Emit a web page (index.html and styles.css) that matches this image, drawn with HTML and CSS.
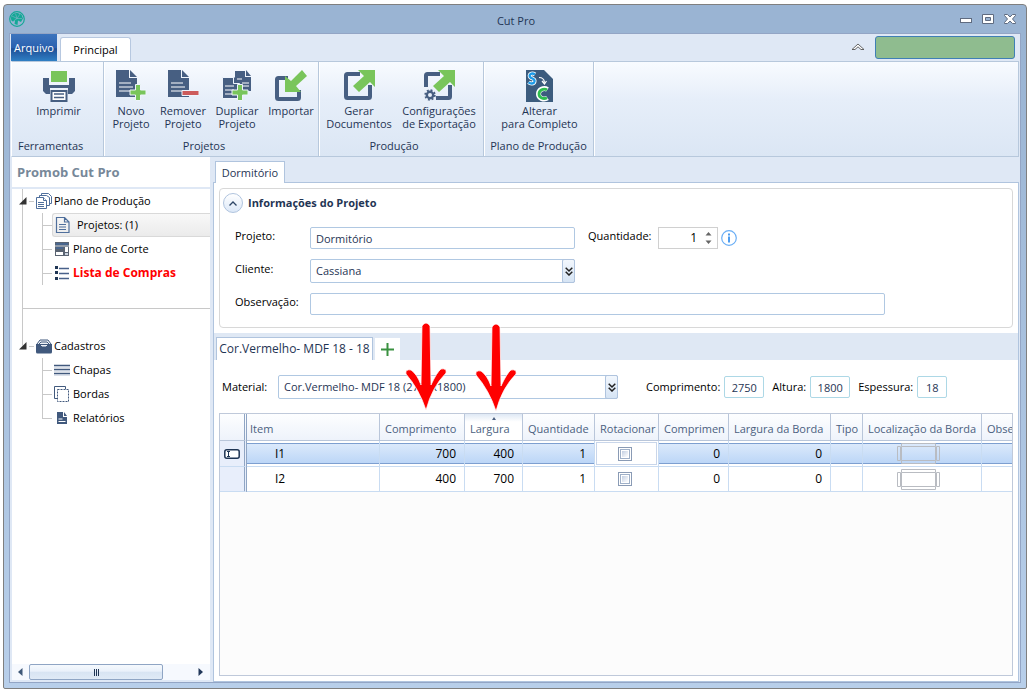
FILE: index.html
```html
<!DOCTYPE html>
<html lang="pt-BR">
<head>
<meta charset="utf-8">
<title>Cut Pro</title>
<link rel="stylesheet" href="styles.css">
</head>
<body>
<div class="window">
  <header class="titlebar">
    <svg class="app-logo" width="16" height="16" viewBox="0 0 16 16"><circle cx="8" cy="8" r="7.300" fill="none" stroke="#14a896" stroke-width="1.200"/><path d="M8.500 2C4 1.500 2 4.500 2 7.500c0 2 1 3 2 3l2-1-.5 3.500 3 1L9 9.500 12 11l2-3.500-1.500-4z" fill="#14a896"/><path d="M8 7.500L3 5M8 7.500L6.500 2.500M8 7.500L11 3M8 7.500l5 0M8 7.500L4.500 10" stroke="#9ab4d3" stroke-width=".5"/></svg>
    <h1 class="title">Cut Pro</h1>
    <div class="window-buttons">
      <button aria-label="Minimizar"><svg width="14" height="14" viewBox="0 0 14 14"><rect x="1.500" y="6.500" width="11" height="4" fill="#fff" stroke="#5f6b80"/></svg></button>
      <button aria-label="Maximizar"><svg width="14" height="14" viewBox="0 0 14 14"><path fill-rule="evenodd" d="M1.500 2.500h11v9h-11zM4.500 5.500v3h5v-3z" fill="#fff" stroke="#5f6b80"/></svg></button>
      <button aria-label="Fechar"><svg width="14" height="14" viewBox="0 0 14 14"><path d="M1.500 2.500h3L7 5l2.500-2.500h3v1L9.500 7l3 3.500v1h-3L7 9l-2.500 2.500h-3v-1l3-3.500-3-3.500z" fill="#fff" stroke="#5f6b80"/></svg></button>
    </div>
  </header>
  <div class="frame">
    <nav class="ribbon-tabs">
      <button class="tab-file">Arquivo</button>
      <button class="tab-main">Principal</button>
      <button class="collapse" aria-label="Recolher"><svg width="14" height="8" viewBox="0 0 14 8"><path d="M1 6.500L7 1l6 5.500h-3L7 3.800 4 6.500z" fill="#fff" stroke="#555" stroke-width=".9"/></svg></button>
      <div class="status"></div>
    </nav>
    <section class="ribbon">
      <div class="group g-tools">
        <div class="group-items">
          <button class="tool w-print"><svg width="32" height="32" viewBox="0 0 32 32"><path d="M0 8h6v7h20V8h6v13l-3 3h-4v-6H7v6H3l-3-3z" fill="#475f82"/><rect x="8" y="1" width="16" height="11" fill="#79c55b"/><path d="M8.500 21h15v10h-15z" fill="#fff" stroke="#475f82" stroke-width="2"/><path d="M11 24h10M11 27.500h10" stroke="#475f82" stroke-width="1.500"/></svg><span>Imprimir</span></button>
        </div>
        <div class="group-name">Ferramentas</div>
      </div>
      <div class="group g-projects">
        <div class="group-items">
          <button class="tool w-new"><svg width="32" height="32" viewBox="0 0 32 32"><path d="M1 0h13v8h8v19H1z" fill="#475f82"/><path d="M15 0l7 7h-7z" fill="#475f82"/><path d="M4 13h12M4 17h14M4 21h12" stroke="#fff" stroke-width="1.200"/><path d="M20.500 14.500h5v5.500h5.500v5h-5.500v5.500h-5V25H15v-5h5.500z" fill="#79c55b" stroke="#eef4fc"/></svg><span>Novo<br>Projeto</span></button>
          <button class="tool w-remove"><svg width="32" height="32" viewBox="0 0 32 32"><path d="M1 0h13v8h8v19H1z" fill="#475f82"/><path d="M15 0l7 7h-7z" fill="#475f82"/><path d="M4 13h12M4 17h14M4 21h12" stroke="#fff" stroke-width="1.200"/><path d="M15 20.500h17v5H15z" fill="#cd5c5c" stroke="#eef4fc"/></svg><span>Remover<br>Projeto</span></button>
          <button class="tool w-copy"><svg width="32" height="32" viewBox="0 0 32 32"><path d="M14 1h10v6h6v14H14z" fill="#475f82"/><path d="M25 0l5 6h-5z" fill="#475f82"/><path d="M16 9h5M21 13h7M21 16h7" stroke="#fff"/><path d="M1.500 7.500h11v6h6v15h-17z" fill="#475f82" stroke="#eef4fc"/><path d="M13 7l6 6h-6z" fill="#475f82"/><path d="M4 16h9M4 20h9M4 24h7" stroke="#fff"/><path d="M16.500 14.500h5v5.500h5.500v5h-5.500v5.500h-5V25H11v-5h5.500z" fill="#79c55b" stroke="#eef4fc"/></svg><span>Duplicar<br>Projeto</span></button>
          <button class="tool w-import"><svg width="32" height="32" viewBox="0 0 32 32"><path d="M13 8H3.500q-1.500 0-1.500 1.500v18q0 1.500 1.500 1.500h19q1.500 0 1.500-1.500V20" fill="none" stroke="#475f82" stroke-width="4"/><path d="M27 0l5 6-11 10 5 6H10V6l6 5z" fill="#79c55b"/></svg><span>Importar</span></button>
        </div>
        <div class="group-name">Projetos</div>
      </div>
      <div class="group g-output">
        <div class="group-items">
          <button class="tool w-docs"><svg width="32" height="32" viewBox="0 0 32 32"><path d="M17 4H4.500Q3 4 3 5.500v21Q3 28 4.500 28h21q1.500 0 1.500-1.500V15" fill="none" stroke="#475f82" stroke-width="4"/><path d="M15 0h17v17l-5-5-11 10-6-6 11-10z" fill="#79c55b"/></svg><span>Gerar<br>Documentos</span></button>
          <button class="tool w-config"><svg width="32" height="32" viewBox="0 0 32 32"><path d="M17 4H4.500Q3 4 3 5.500V17M13 28h12.500q1.500 0 1.500-1.500V15" fill="none" stroke="#475f82" stroke-width="4"/><path d="M15 0h17v17l-5-5-11 10-6-6 11-10z" fill="#79c55b"/><circle cx="7" cy="25" r="3.200" fill="none" stroke="#475f82" stroke-width="2.400"/><circle cx="7" cy="25" r="4.800" fill="none" stroke="#475f82" stroke-width="1.800" stroke-dasharray="1.900 1.870"/></svg><span>Configurações<br>de Exportação</span></button>
        </div>
        <div class="group-name">Produção</div>
      </div>
      <div class="group g-plan">
        <div class="group-items">
          <button class="tool w-change"><svg width="27" height="32" viewBox="0 0 27 32"><path d="M0 0h18l9 9v23H0z" fill="#3c5c7e"/><path d="M9 4.500C5.500 2 2 5 4.500 7.500c2 1.500 4.500 1 4 4-.5 2.500-4 2.500-6 .8" fill="none" stroke="#fff" stroke-width="4"/><path d="M9 4.500C5.500 2 2 5 4.500 7.500c2 1.500 4.500 1 4 4-.5 2.500-4 2.500-6 .8" fill="none" stroke="#1d9be8" stroke-width="2.400"/><path d="M13 7.500q5 0 5.500 5M16 11l2.500 3 2-3" fill="none" stroke="#fff" stroke-width="1.200"/><path d="M21.500 19.500c-4-2.500-9 .5-9 4.500s5 6.500 9 4" fill="none" stroke="#fff" stroke-width="5"/><path d="M21 19.800c-3.500-2-8 .5-8 4.200s4.500 5.700 8 3.700" fill="none" stroke="#2ebd4e" stroke-width="2.800"/></svg><span>Alterar<br>para Completo</span></button>
        </div>
        <div class="group-name">Plano de Produção</div>
      </div>
    </section>

    <div class="workspace">
      <aside class="sidebar">
        <h2 class="side-title">Promob Cut Pro</h2>
        <div class="tree-area">
          <ul class="tree">
            <li class="root first">
              <div class="node"><svg class="expander" width="8" height="8" viewBox="0 0 8 8"><path d="M7.500 0v7.500H0z" fill="#333"/></svg><i class="stub"></i><svg width="16" height="16" viewBox="0 0 16 16"><g fill="#fff" stroke="#4f6f9c"><path d="M5.500 .5h7l3 3v7h-10z"/><path d="M3.500 2.500h7l3 2v8h-10z"/><path d="M.5 4.500h7l3 3v8H.5z"/><path d="M2 9.500h6M2 11.500h6M2 13.500h6M7.500 4.500v3h3"/></g></svg><span>Plano de Produção</span></div>
              <ul>
                <li><div class="node selected"><svg width="16" height="16" viewBox="0 0 16 16"><path d="M1.500 .5h8l4.500 4.500v10.500H1.500zM9.500 .5V5H14M4 7.500h7M4 10h7M4 12.500h7" fill="none" stroke="#4f6f9c" stroke-width="1.200"/></svg><span>Projetos: (1)</span></div></li>
                <li><div class="node"><svg width="16" height="16" viewBox="0 0 16 16"><path d="M1 1h14v14H1z" fill="#5a6472"/><path d="M2 3h12M2 7h7" stroke="#49668e" stroke-width="2"/><path d="M1 5h14" stroke="#c9d2de"/><path d="M2 11h7v3H2zM11 6h3v5h-3z" fill="#fff"/><path d="M11 12h3v2h-3z" fill="#c9d2de"/></svg><span>Plano de Corte</span></div></li>
                <li><div class="node alert"><svg width="16" height="16" viewBox="0 0 16 16"><path d="M1 1h3v3H1zM1 6h3v3H1zM1 12h3v3H1z" fill="#1f3554"/><path d="M5 3.500h10M5 8.500h10M5 13.500h10" stroke="#49618a" stroke-width="1.500"/></svg><span>Lista de Compras</span></div></li>
              </ul>
            </li>
            <li class="root second">
              <div class="node"><svg class="expander" width="8" height="8" viewBox="0 0 8 8"><path d="M7.500 0v7.500H0z" fill="#333"/></svg><i class="stub"></i><svg width="16" height="16" viewBox="0 0 16 16"><path d="M0 6h16v8q0 1.500-1.500 1.500h-13Q0 15.500 0 14z" fill="#41597d"/><path d="M1 6l3-4h8l3 4M3 6l2-2h6l2 2M4 7l2 2h4l2-2" fill="#eef2f7" stroke="#41597d"/></svg><span>Cadastros</span></div>
              <ul>
                <li><div class="node"><svg width="16" height="16" viewBox="0 0 16 16"><path d="M0 3.500h16M0 7.500h16M0 11.500h16" stroke="#41597d" stroke-width="1.500"/><path d="M0 5h16M0 9h16M0 13h16" stroke="#b9c4d6"/></svg><span>Chapas</span></div></li>
                <li><div class="node"><svg width="16" height="16" viewBox="0 0 16 16"><path d="M3 12.500H.5V.5h11V3" fill="none" stroke="#41597d"/><path d="M3.500 3.500h11v12h-11z" fill="none" stroke="#41597d" stroke-dasharray="2 1"/></svg><span>Bordas</span></div></li>
                <li class="last"><div class="node"><svg width="16" height="16" viewBox="0 0 16 16"><path d="M3 2h6v5h4v7H3z" fill="#41597d"/><path d="M10 2l3 4h-3z" fill="#41597d"/><path d="M4.500 9h4M4.500 11.500h7" stroke="#fff"/></svg><span>Relatórios</span></div></li>
              </ul>
            </li>
          </ul>
        </div>
        <div class="hscroll">
          <button aria-label="Rolar para a esquerda"><svg width="5" height="8" viewBox="0 0 5 8"><path d="M4.500 0v8L0 4z" fill="#3f5878"/></svg></button>
          <div class="thumb"><i></i><i></i><i></i></div>
          <button aria-label="Rolar para a direita"><svg width="5" height="8" viewBox="0 0 5 8"><path d="M.5 0v8L5 4z" fill="#22385a"/></svg></button>
        </div>
      </aside>

      <main class="main">
        <div class="doc-tabs"><button class="doc-tab">Dormitório</button></div>
        <div class="doc">
          <fieldset class="info">
            <div class="info-head">
              <button class="round" aria-label="Recolher informações"><svg width="8" height="5" viewBox="0 0 8 5"><path d="M.5 4.500L4 1l3.500 3.500" fill="none" stroke="#2d4566" stroke-width="1.300"/></svg></button>
              <h3>Informações do Projeto</h3>
            </div>
            <div class="form-row">
              <label for="projeto">Projeto:</label>
              <input id="projeto" class="field medium" type="text" value="Dormitório">
              <label class="qty-label" for="quantidade">Quantidade:</label>
              <div class="spin">
                <input id="quantidade" type="text" value="1">
                <svg width="7" height="12" viewBox="0 0 7 12"><path d="M.5 3.500L3.500 0l3 3.500zM.5 8.500h6l-3 3.500z" fill="#666"/></svg>
              </div>
              <svg class="hint" width="16" height="16" viewBox="0 0 16 16"><circle cx="8" cy="8" r="7.300" fill="#fff" stroke="#6aaef5" stroke-width="1.200"/><path d="M7 3.500h2v2H7zM7 6.500h2v6H7z" fill="#4d9df0"/></svg>
            </div>
            <div class="form-row tall">
              <label for="cliente">Cliente:</label>
              <div class="combo medium">
                <select id="cliente"><option>Cassiana</option></select>
                <span class="drop"><svg width="8" height="9" viewBox="0 0 8 9"><path d="M.7 .7L4 4 7.300 .7M.7 4.700L4 8l3.300-3.300" fill="none" stroke="#222" stroke-width="1.500"/></svg></span>
              </div>
            </div>
            <div class="form-row">
              <label for="obs">Observação:</label>
              <input id="obs" class="field long" type="text">
            </div>
          </fieldset>

          <section class="sheet">
            <div class="sheet-tabs">
              <button class="sheet-tab">Cor.Vermelho- MDF 18 - 18</button>
              <button class="add" aria-label="Adicionar"><svg width="13" height="13" viewBox="0 0 13 13"><path d="M6.500 0v13M0 6.500h13" stroke="#3a9140" stroke-width="2"/></svg></button>
            </div>
            <div class="material">
              <label for="material">Material:</label>
              <div class="combo wide">
                <select id="material"><option>Cor.Vermelho- MDF 18 (2750x1800)</option></select>
                <span class="drop"><svg width="8" height="9" viewBox="0 0 8 9"><path d="M.7 .7L4 4 7.300 .7M.7 4.700L4 8l3.300-3.300" fill="none" stroke="#222" stroke-width="1.500"/></svg></span>
              </div>
              <div class="dims">
                <div class="dim"><label for="comp">Comprimento:</label><input id="comp" type="text" value="2750" readonly></div>
                <div class="dim"><label for="alt">Altura:</label><input id="alt" type="text" value="1800" readonly></div>
                <div class="dim narrow"><label for="esp">Espessura:</label><input id="esp" type="text" value="18" readonly></div>
              </div>
            </div>
            <div class="grid">
              <table>
                <colgroup><col class="c-head"><col class="c-item"><col class="c-comp"><col class="c-larg"><col class="c-qty"><col class="c-rot"><col class="c-cb"><col class="c-lb"><col class="c-tipo"><col class="c-loc"><col></colgroup>
                <thead><tr><th></th><th>Item</th><th>Comprimento</th><th class="sorted">Largura</th><th>Quantidade</th><th>Rotacionar</th><th>Comprimen</th><th>Largura da Borda</th><th>Tipo</th><th>Localização da Borda</th><th>Obse</th></tr></thead>
                <tbody>
                  <tr class="current"><td><svg width="16" height="10" viewBox="0 0 16 10"><rect x=".8" y=".8" width="14.400" height="8.400" rx="2" fill="#fff" stroke="#1f3554" stroke-width="1.500"/><path d="M3 2.500h3M3 7.500h3M4.500 2.500v5" stroke="#1f3554"/></svg></td><td class="item">I1</td><td class="n">700</td><td class="n">400</td><td class="n">1</td><td class="check"><input type="checkbox" aria-label="Rotacionar I1"></td><td class="n">0</td><td class="n">0</td><td></td><td class="edge"><svg width="44" height="23" viewBox="0 0 44 23"><path d="M5.500 1.500h34v3h-34zM5.500 18.500h34v3h-34zM5.500 4.500v14M39.500 4.500v14M1.500 4.500h3v14h-3zM40.500 4.500h3v14h-3z" fill="none" stroke="#b9bcc2"/></svg></td><td></td></tr>
                  <tr><td></td><td class="item">I2</td><td class="n">400</td><td class="n">700</td><td class="n">1</td><td class="check"><input type="checkbox" aria-label="Rotacionar I2"></td><td class="n">0</td><td class="n">0</td><td></td><td class="edge"><svg width="44" height="23" viewBox="0 0 44 23"><path d="M5.500 1.500h34v3h-34zM5.500 18.500h34v3h-34zM5.500 4.500v14M39.500 4.500v14M1.500 4.500h3v14h-3zM40.500 4.500h3v14h-3z" fill="none" stroke="#b9bcc2"/></svg></td><td></td></tr>
                </tbody>
              </table>
            </div>
            <svg class="arrow a1" width="44" height="92" viewBox="0 0 44 92"><path d="M18 5Q22 -1 26 5L27 64Q33 51 37 48q6-1 5 4Q28 66 22 89 15 68 2 53q-1-5 5-4 6 4 10 15z" fill="#fe0000" stroke="#fff" stroke-opacity=".7"/></svg>
            <svg class="arrow a2" width="44" height="92" viewBox="0 0 44 92"><path d="M18 5Q22 -1 26 5L27 64Q33 51 37 48q6-1 5 4Q28 66 22 89 15 68 2 53q-1-5 5-4 6 4 10 15z" fill="#fe0000" stroke="#fff" stroke-opacity=".7"/></svg>
          </section>
        </div>
      </main>
    </div>
  </div>
</div>
</body>
</html>
```
FILE: styles.css
```css
* { box-sizing: border-box; }

body {
  margin: 0;
  background: #fff;
  font-family: "Open Sans", "Noto Sans", sans-serif;
  font-size: 11px;
  line-height: 16px;
  color: #000;
}

button, input, select { font: inherit; color: inherit; }
button { padding: 0; border: 0; background: none; }
svg { display: block; flex: none; }
h1, h2, h3, ul { margin: 0; padding: 0; }
ul { list-style: none; }

.window {
  display: flex;
  flex-direction: column;
  min-height: calc(100vh - 7px);
  margin: 4px 3px 3px;
  padding: 0 5px;
  border: 1px solid #7f7f7f;
  border-radius: 4px 4px 2px 2px;
  background: linear-gradient(#9ab4d3, #9ab4d3 30px, #b8cfea);
}

.titlebar {
  display: grid;
  grid-template-columns: 80px 1fr 80px;
  align-items: center;
  height: 28px;
}
.title { font-size: 11px; font-weight: 400; text-align: center; color: #1f3554; padding: 4px 0 0 2px; }
.window-buttons { display: flex; justify-content: flex-end; gap: 8px; padding-right: 4px; }

.frame {
  flex: 1;
  display: flex;
  flex-direction: column;
  margin-bottom: 5px;
  padding: 0 1px;
  border: 1px solid #93a5c5;
  background: #dfe8f5;
}

.ribbon-tabs { display: flex; align-items: flex-end; height: 27px; }
.tab-file {
  width: 46px;
  height: 27px;
  color: #fff;
  background: linear-gradient(#3c74bd, #2b62b0 50%, #1f4f97 55%, #2f7fc4);
}
.tab-main {
  width: 71px;
  height: 24px;
  margin-left: 3px;
  border: 1px solid #b7c8e0;
  border-bottom: 0;
  border-radius: 3px 3px 0 0;
  background: #fff;
}
.collapse { margin: 0 10px 10px auto; }
.status {
  width: 140px;
  height: 23px;
  margin: 0 4px 2px 0;
  border: 1px solid #3f7fb5;
  border-radius: 3px;
  background: #8fbc8f;
}

.ribbon {
  display: flex;
  height: 96px;
  border: 1px solid #b7c8dc;
  border-left-color: #fff;
  background: linear-gradient(#f8fbff, #e6eef9 40%, #dbe6f4);
  color: #1f3554;
}
.group {
  display: flex;
  flex-direction: column;
  justify-content: space-between;
  border-right: 1px solid #b7c8dc;
  box-shadow: 1px 0 #fff;
  padding: 8px 0 2px;
  white-space: nowrap;
}
.g-tools { width: 92px; }
.g-projects { width: 215px; }
.g-output { width: 165px; }
.g-plan { width: 110px; }
.group-items { display: flex; justify-content: center; }
.group-name { text-align: center; }
.g-tools .group-name { text-align: left; padding-left: 6px; }
.g-projects .group-name, .g-output .group-name { padding-right: 14px; }
.g-tools .group-items, .g-plan .group-items { padding-left: 2px; }
.tool {
  display: flex;
  flex-direction: column;
  align-items: center;
  gap: 2px;
  line-height: 13px;
}
.w-new, .w-remove { width: 52px; }
.w-copy { width: 56px; }
.w-import { width: 52px; }
.w-docs { width: 76px; }
.w-config { width: 84px; }

.workspace { flex: 1; display: flex; }
.sidebar {
  display: flex;
  flex-direction: column;
  width: 199px;
  margin: 0 3px 2px 0;
  padding-left: 1px;
}
.side-title {
  height: 30px;
  padding: 7px 5px;
  background: #fff;
  font-size: 13px;
  line-height: 16px;
  color: #778899;
}
.tree-area { flex: 1; margin-top: 2px; background: #fff; overflow: hidden; }
.tree { padding-left: 7px; }
.root { position: relative; }
.root.first {
  height: 120px;
  margin-left: 3px;
  border-left: 1px solid #c8c8c8;
  border-bottom: 1px solid #c8c8c8;
}
.root.first > .node { margin-left: -4px; }
.root.first > ul { margin-left: 19px; }
.root.second { padding-top: 25px; margin-left: 3px; }
.root.second > .node { margin-left: -3px; }
.root.second > ul { margin-left: 20px; }
.root.second::before {
  content: "";
  position: absolute;
  left: 0;
  top: 0;
  height: 37px;
  border-left: 1px solid #c8c8c8;
}
.node { display: flex; align-items: center; height: 24px; gap: 2px; white-space: nowrap; }
.stub { width: 5px; height: 1px; background: #c8c8c8; }
.root ul li { position: relative; padding-left: 9px; border-left: 1px solid #c8c8c8; }
.root ul li::before {
  content: "";
  position: absolute;
  left: 0;
  top: 12px;
  width: 9px;
  border-top: 1px solid #c8c8c8;
}
.root ul li.last { border-left-color: transparent; }
.root ul li.last::after {
  content: "";
  position: absolute;
  left: -1px;
  top: 0;
  height: 13px;
  border-left: 1px solid #c8c8c8;
}
.root ul .node { padding-left: 2px; gap: 3px; }
.node.selected {
  border: 1px solid #d9d9d9;
  border-right: 0;
  border-radius: 3px 0 0 3px;
  background: linear-gradient(#f8f8f8, #ebebeb);
}
.node.selected span { padding-left: 3px; }
.node.alert { color: #f00; font-size: 12px; font-weight: 700; }

.hscroll {
  display: flex;
  align-items: center;
  height: 16px;
  padding: 0 7px 0 6px;
  background: #f6f9fe;
}
.thumb {
  display: flex;
  align-items: center;
  justify-content: center;
  gap: 1px;
  width: 134px;
  height: 16px;
  margin: 0 auto 0 6px;
  border: 1px solid #8fa5c4;
  border-radius: 2px;
  background: linear-gradient(#f5f9fd, #eaf1fa 45%, #d8e4f2 50%, #e0eaf6);
}
.thumb i { width: 1px; height: 7px; background: #1f3554; }

.main { flex: 1; display: flex; flex-direction: column; min-width: 0; }
.doc-tabs { display: flex; align-items: flex-end; height: 25px; padding-left: 2px; }
.doc-tab {
  width: 70px;
  height: 22px;
  margin-bottom: -1px;
  z-index: 1;
  border: 1px solid #b0c4de;
  border-bottom: 0;
  background: #fff;
  color: #1f3554;
}
.doc {
  flex: 1;
  display: flex;
  flex-direction: column;
  border: 1px solid #b0c4de;
  background: #fff;
}

.info {
  margin: 5px 5px 5px;
  min-width: 0;
  height: 140px;
  padding: 2px 15px 0;
  border: 1px solid #d8d8d8;
  border-radius: 4px;
}
.info-head { display: flex; align-items: center; gap: 5px; height: 24px; margin-left: -12px; }
.info-head h3 { font-size: 11px; line-height: 16px; color: #1f3554; }
.round {
  display: flex;
  align-items: center;
  justify-content: center;
  width: 20px;
  height: 20px;
  border: 1px solid #b0c4de;
  border-radius: 50%;
  background: linear-gradient(#fff, #dce8f8);
}
.form-row { display: flex; align-items: center; height: 22px; margin-top: 12px; }
.form-row.tall { height: 24px; margin-top: 10px; }
.form-row.tall + .form-row { margin-top: 10px; }
.form-row > label:first-child { width: 75px; padding-bottom: 4px; }
.field {
  height: 22px;
  padding: 0 5px;
  border: 1px solid #b0c8e2;
  border-radius: 2px;
  background: #fff;
  color: #1f3554;
}
.medium { width: 265px; }
.long { width: 575px; }
.qty-label { margin-left: 13px; width: 70px; padding-bottom: 4px; }
.spin {
  display: flex;
  align-items: center;
  width: 60px;
  height: 22px;
  padding-right: 5px;
  border: 1px solid #d0d0d0;
}
.spin input { flex: 1; min-width: 0; border: 0; padding: 0 8px; text-align: right; font-size: 12px; }
.hint { margin-left: 3px; }

.combo { position: relative; height: 24px; }
.combo select {
  appearance: none;
  width: 100%;
  height: 24px;
  padding: 0 16px 0 5px;
  border: 1px solid #b0c8e2;
  border-radius: 2px;
  background: #fff;
  color: #1f3554;
}
.drop {
  position: absolute;
  top: 0;
  right: 0;
  display: flex;
  align-items: center;
  justify-content: center;
  width: 13px;
  height: 24px;
  border: 1px solid #b0c4de;
  border-radius: 2px;
  background: linear-gradient(#f2f7fd, #d6e4f4);
  pointer-events: none;
}

.sheet { position: relative; flex: 1; display: flex; flex-direction: column; }
.sheet-tabs {
  display: flex;
  align-items: flex-end;
  gap: 2px;
  height: 27px;
  padding-left: 2px;
  background: #dfe8f4;
}
.sheet-tab {
  width: 157px;
  height: 23px;
  border: 1px solid #b0c4de;
  border-bottom: 0;
  background: #fff;
  color: #1f3554;
  font-size: 12px;
  white-space: nowrap;
}
.add { display: flex; align-items: center; justify-content: center; width: 25px; height: 22px; background: #fff; }

.material { display: flex; align-items: center; height: 24px; margin: 15px 8px 14px; }
.material > label { width: 56px; }
.combo.wide { width: 340px; }
.dims { display: flex; gap: 8px; margin-left: 28px; }
.dim { display: flex; align-items: center; gap: 4px; }
.dim input {
  width: 40px;
  height: 22px;
  padding: 0;
  border: 1px solid #add8e6;
  border-radius: 2px;
  background: #fff;
  color: #1f3554;
  text-align: center;
}
.dim.narrow input { width: 30px; }

.grid { flex: 1; margin: 0 5px 5px; border: 1px solid #bfc9da; background: #fcfcfc; }
table { width: 100%; table-layout: fixed; border-collapse: separate; border-spacing: 0; }
.c-head { width: 27px; }
.c-item { width: 133px; }
.c-comp { width: 85px; }
.c-larg { width: 58px; }
.c-qty { width: 72px; }
.c-rot { width: 64px; }
.c-cb { width: 70px; }
.c-lb { width: 102px; }
.c-tipo { width: 32px; }
.c-loc { width: 119px; }
th, td { padding: 0; overflow: hidden; white-space: nowrap; }
th {
  position: relative;
  height: 27px;
  padding: 3px 0 0 5px;
  border-right: 1px solid #b9c6da;
  border-bottom: 1px solid #b9c6da;
  background: linear-gradient(#fdfeff, #eef3fb);
  font-weight: 400;
  text-align: left;
  color: #4b5f80;
}
th:nth-child(2) { padding-left: 3px; }
th:first-child, td:first-child { border-right: 3px double #8fa5c4; }
.sorted { background: linear-gradient(#dfe9f5, #fff 30%); }
.sorted::before {
  content: "";
  position: absolute;
  left: 27px;
  top: 3px;
  border: 2px solid transparent;
  border-top: 0;
  border-bottom: 3px solid #4b5f80;
}
th:last-child, td:last-child { border-right: 0; }
td {
  height: 25px;
  border-right: 1px solid #c9dcf2;
  border-bottom: 1px solid #c9dcf2;
  background: #fff;
  font-size: 12px;
}
td:first-child { background: #e8eefb; padding-left: 4px; }
.current td { height: 26px; }
.current td:not(:first-child):not(.check) {
  background:
    linear-gradient(#7d9fd0, #7d9fd0) 0 2px / 100% 1px no-repeat,
    linear-gradient(#7d9fd0, #7d9fd0) 0 22px / 100% 1px no-repeat,
    linear-gradient(#dbe9fb, #bcd6f7) 0 3px / 100% 19px no-repeat,
    #fff;
}
.current .check { box-shadow: inset 0 0 0 1px #fff, inset 0 0 0 2px #c9d6ea; }
.item { padding-left: 28px; }
.n { text-align: right; padding-right: 8px; }
.check { padding-right: 4px; }
.check input {
  appearance: none;
  display: block;
  width: 14px;
  height: 14px;
  margin: 0 auto;
  padding: 3px;
  border: 1px solid #8a9bb5;
  background: linear-gradient(135deg, #c3cfe2, #fff) content-box;
  box-shadow: inset 0 0 0 1px #fff, inset 0 0 0 2px #9fb0c8;
}
.edge { padding-right: 9px; }
.edge svg { margin: 0 auto; }

.arrow { position: absolute; pointer-events: none; }
.a1 { left: 190px; top: -12px; }
.a2 { left: 260px; top: -11px; }
```
